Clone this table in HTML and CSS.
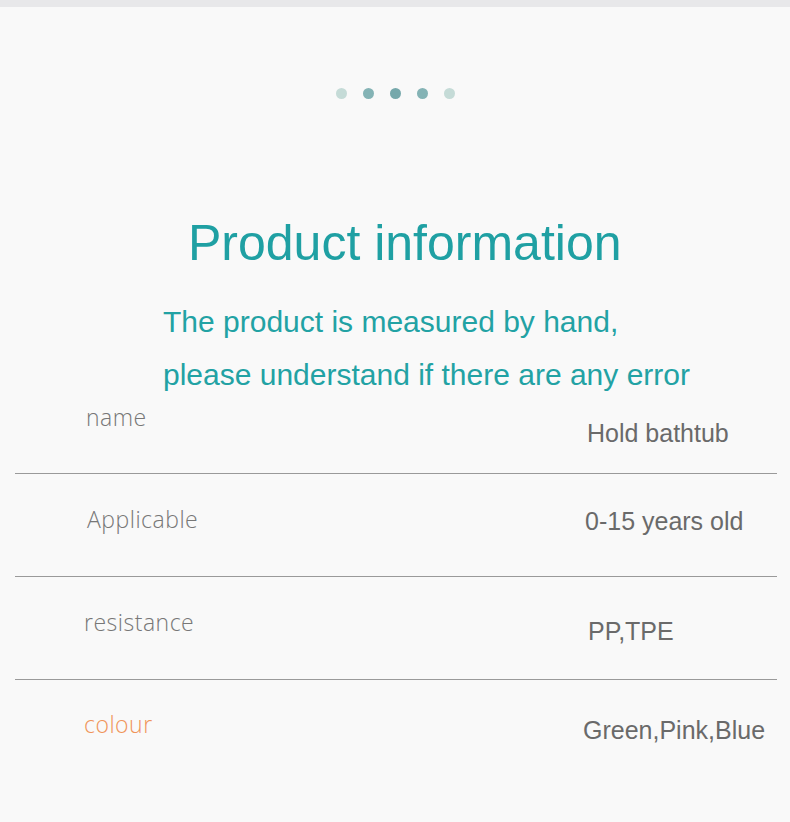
FILE: index.html
```html
<!DOCTYPE html>
<html lang="en">
<head>
<meta charset="utf-8">
<title>Product information</title>
<link rel="stylesheet" href="styles.css">
</head>
<body>
<div class="topbar"></div>
<main class="page">
  <div class="dots">
    <span class="dot dot-light"></span>
    <span class="dot dot-mid"></span>
    <span class="dot dot-dark"></span>
    <span class="dot dot-mid"></span>
    <span class="dot dot-light"></span>
  </div>
  <h1 class="title">Product information</h1>
  <p class="subtitle">The product is measured by hand,<br>please understand if there are any error</p>
  <div class="table">
    <div class="row row-1">
      <span class="label">name</span>
      <span class="value">Hold bathtub</span>
    </div>
    <div class="row row-2">
      <span class="label">Applicable</span>
      <span class="value">0-15 years old</span>
    </div>
    <div class="row row-3">
      <span class="label">resistance</span>
      <span class="value">PP,TPE</span>
    </div>
    <div class="row row-4">
      <span class="label label-accent">colour</span>
      <span class="value">Green,Pink,Blue</span>
    </div>
  </div>
</main>
</body>
</html>
```

FILE: styles.css
```css
html, body {
  margin: 0;
  padding: 0;
}
body {
  background: #f9f9f9;
  height: 822px;
  overflow: hidden;
  font-family: "Liberation Sans", Arial, sans-serif;
}
.topbar {
  height: 7px;
  background: #e8e8ea;
}
.page {
  display: flex;
  flex-direction: column;
}
.dots {
  margin-top: 81px;
  display: flex;
  justify-content: center;
  gap: 16px;
  height: 11px;
}
.dot {
  width: 11px;
  height: 11px;
  border-radius: 50%;
}
.dot-light { background: #c5dbd7; }
.dot-mid { background: #84b3b5; }
.dot-dark { background: #76a8ab; }

.title {
  margin: 114px 0 0 188px;
  font-family: "Liberation Sans", Arial, sans-serif;
  font-weight: normal;
  font-size: 50px;
  line-height: 60px;
  color: #1fa0a3;
}
.subtitle {
  margin: 22px 0 0 163px;
  font-size: 30px;
  line-height: 53px;
  color: #22a2a4;
}
.table {
  display: flex;
  flex-direction: column;
  margin: 2px 13px 0 15px;
}
.row {
  display: grid;
  grid-template-columns: 500px 1fr;
  border-bottom: 1px solid #9a9a9a;
  padding-left: 70px;
  height: 103px;
  box-sizing: border-box;
}
.row-1 { height: 71px; }
.row-4 { border-bottom: none; }
.label {
  font-family: "Open Sans", "Noto Sans", sans-serif;
  font-weight: 300;
  font-size: 23px;
  letter-spacing: 0.5px;
  line-height: 24px;
  color: #777777;
}
.label-accent { color: #f0955a; }
.value {
  font-size: 25px;
  line-height: 30px;
  color: #6a6a6a;
}
.row-1 .label { padding-top: 2px; margin-left: 1px; }
.row-1 .value { padding-top: 15px; margin-left: 2px; }
.row-2 .label { padding-top: 33px; margin-left: 2px; }
.row-2 .value { padding-top: 32px; }
.row-3 .label { padding-top: 33px; margin-left: -1px; }
.row-3 .value { padding-top: 39px; margin-left: 3px; }
.row-4 .label { padding-top: 32px; margin-left: -1px; }
.row-4 .value { padding-top: 35px; margin-left: -2px; }
```
